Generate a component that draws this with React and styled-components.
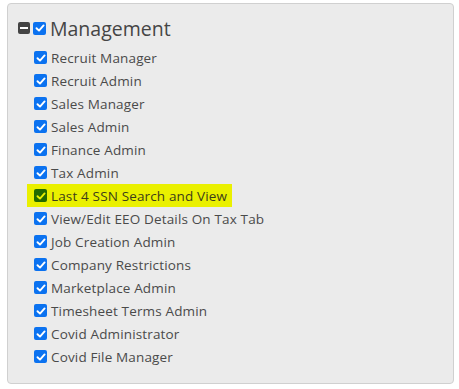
import React from 'react'
import styled, { createGlobalStyle } from 'styled-components'

const GlobalStyle = createGlobalStyle`
  body {
    margin: 0;
    background: #ffffff;
    font-family: "Open Sans", "Liberation Sans", sans-serif;
  }
`

const Panel = styled.div`
  box-sizing: border-box;
  width: 447px;
  height: 381px;
  margin: 3px 0 0 7px;
  padding: 11px 10px 13px;
  background: #ebebeb;
  border: 1px solid #d0d0d0;
  border-radius: 4px;
`

const Header = styled.div`
  display: flex;
  align-items: center;
  height: 26px;
  margin-bottom: 5px;
`

const Toggle = styled.span`
  display: inline-flex;
  align-items: center;
  justify-content: center;
  width: 12px;
  height: 12px;
  margin-right: 3px;
  background: #444444;
  border-radius: 2px;

  &::after {
    content: '';
    width: 8px;
    height: 2px;
    background: #ffffff;
  }
`

const Title = styled.span`
  margin-left: 4px;
  font-size: 19.5px;
  color: #454545;
`

const List = styled.div`
  display: flex;
  flex-direction: column;
  align-items: flex-start;
  padding-left: 9px;
`

const Row = styled.label`
  display: inline-flex;
  align-items: center;
  height: 23px;
  padding: 0 5px 0 7px;
  gap: 4px;
  background: ${p => (p.$highlight ? '#eaf000' : 'transparent')};
  font-size: 13.5px;
  letter-spacing: 0.15px;
  color: ${p => (p.$highlight ? '#3d3d1a' : '#4a4a4a')};
`

const Box = styled.span`
  display: inline-flex;
  align-items: center;
  justify-content: center;
  width: 13px;
  height: 13px;
  border-radius: 2px;
  background: ${p => (p.$highlight ? '#236a00' : '#0b72f0')};
  flex-shrink: 0;
`

const Check = ({ color }) => (
  <svg width="10" height="10" viewBox="0 0 10 10">
    <path d="M1.5 5.2 L4 7.6 L8.6 2.4" fill="none" stroke={color} strokeWidth="1.9" strokeLinecap="round" strokeLinejoin="round" />
  </svg>
)

const Checkbox = ({ highlight }) => (
  <Box $highlight={highlight}>
    <Check color={highlight ? '#eaf000' : '#ffffff'} />
  </Box>
)

const roles = [
  'Recruit Manager',
  'Recruit Admin',
  'Sales Manager',
  'Sales Admin',
  'Finance Admin',
  'Tax Admin',
  'Last 4 SSN Search and View',
  'View/Edit EEO Details On Tax Tab',
  'Job Creation Admin',
  'Company Restrictions',
  'Marketplace Admin',
  'Timesheet Terms Admin',
  'Covid Administrator',
  'Covid File Manager',
]

export default function App() {
  return (
    <>
      <GlobalStyle />
      <Panel>
        <Header>
          <Toggle />
          <Checkbox />
          <Title>Management</Title>
        </Header>
        <List>
          {roles.map(r => {
            const hl = r.startsWith('Last 4')
            return (
              <Row key={r} $highlight={hl}>
                <Checkbox highlight={hl} />
                {r}
              </Row>
            )
          })}
        </List>
      </Panel>
    </>
  )
}
